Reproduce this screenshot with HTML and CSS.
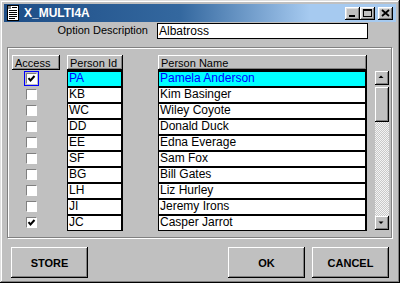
FILE: index.html
```html
<!DOCTYPE html>
<html>
<head>
<meta charset="utf-8">
<link rel="stylesheet" href="styles.css">
</head>
<body>
<div class="window">
  <div class="titlebar">
    <svg class="app-icon" width="12" height="16" viewBox="0 0 12 16">
      <rect x="0.5" y="0.5" width="11" height="15" fill="#fff" stroke="#000"/>
      <rect x="1" y="1" width="3" height="3" fill="#808080"/>
      <path d="M5 2.5h5M2 5.5h8M2 7.5h8M2 9.5h8M2 11.5h8M2 13.5h6" stroke="#000"/>
    </svg>
    <span class="title">X_MULTI4A</span>
    <div class="title-buttons">
      <span class="tbtn"><svg width="15" height="13" viewBox="0 0 15 13"><rect x="4" y="8" width="6" height="2" fill="#000"/></svg></span>
      <span class="tbtn"><svg width="15" height="13" viewBox="0 0 15 13"><rect x="3.5" y="2.5" width="8" height="7" fill="none" stroke="#000"/><rect x="3" y="2" width="9" height="2" fill="#000"/></svg></span>
      <span class="tbtn close"><svg width="15" height="13" viewBox="0 0 15 13"><path d="M4 3l7 6M11 3l-7 6" stroke="#000" stroke-width="1.8"/></svg></span>
    </div>
  </div>

  <div class="form-row">
    <span class="label">Option Description</span>
    <div class="input">Albatross</div>
  </div>

  <div class="group">
    <div class="col col-access">
      <div class="hdr">Access</div>
      <div class="crow"><span class="cb focus"><svg width="9" height="9" viewBox="0 0 9 9"><path d="M1.5 4.2l2 2.2 4-4.4" fill="none" stroke="#000" stroke-width="2"/></svg></span></div>
      <div class="crow"><span class="cb"></span></div>
      <div class="crow"><span class="cb"></span></div>
      <div class="crow"><span class="cb"></span></div>
      <div class="crow"><span class="cb"></span></div>
      <div class="crow"><span class="cb"></span></div>
      <div class="crow"><span class="cb"></span></div>
      <div class="crow"><span class="cb"></span></div>
      <div class="crow"><span class="cb"></span></div>
      <div class="crow"><span class="cb"><svg width="9" height="9" viewBox="0 0 9 9"><path d="M1.5 4.2l2 2.2 4-4.4" fill="none" stroke="#000" stroke-width="2"/></svg></span></div>
    </div>

    <div class="col col-id">
      <div class="hdr">Person Id</div>
      <div class="cell sel">PA</div>
      <div class="cell">KB</div>
      <div class="cell">WC</div>
      <div class="cell">DD</div>
      <div class="cell">EE</div>
      <div class="cell">SF</div>
      <div class="cell">BG</div>
      <div class="cell">LH</div>
      <div class="cell">JI</div>
      <div class="cell">JC</div>
    </div>

    <div class="col col-name">
      <div class="hdr">Person Name</div>
      <div class="cell sel">Pamela Anderson</div>
      <div class="cell">Kim Basinger</div>
      <div class="cell">Wiley Coyote</div>
      <div class="cell">Donald Duck</div>
      <div class="cell">Edna Everage</div>
      <div class="cell">Sam Fox</div>
      <div class="cell">Bill Gates</div>
      <div class="cell">Liz Hurley</div>
      <div class="cell">Jeremy Irons</div>
      <div class="cell">Casper Jarrot</div>
    </div>

    <div class="scrollbar">
      <span class="sbtn"><svg width="13" height="13" viewBox="0 0 13 13"><polygon points="3.5,7 8.5,7 6,4.5" fill="#000"/></svg></span>
      <span class="thumb"></span>
      <span class="track"></span>
      <span class="sbtn"><svg width="13" height="13" viewBox="0 0 13 13"><polygon points="3.5,5.5 8.5,5.5 6,8" fill="#000"/></svg></span>
    </div>
  </div>

  <div class="buttons">
    <span class="btn">STORE</span>
    <span class="btn push">OK</span>
    <span class="btn">CANCEL</span>
  </div>
</div>
</body>
</html>
```

FILE: styles.css
```css
* { box-sizing: border-box; }

html, body {
  margin: 0;
  padding: 0;
  background: #c0c0c0;
}

body {
  font-family: "Liberation Sans", Arial, sans-serif;
  font-size: 11px;
  color: #000;
}

.window {
  width: 400px;
  height: 283px;
  padding: 4px 4px 5px 4px;
  background: #c0c0c0;
  box-shadow: inset -1px -1px #000, inset 1px 1px #dfdfdf, inset -2px -2px #808080, inset 2px 2px #fff;
  display: flex;
  flex-direction: column;
}

/* title bar */
.titlebar {
  height: 18px;
  display: flex;
  align-items: center;
  padding: 0 3px 0 3px;
  background: linear-gradient(90deg, #1d4d86 0%, #34689f 45%, #a6caf0 78%, #a6caf0 100%);
}

.app-icon {
  display: block;
  flex: none;
}

.title {
  margin-left: 5px;
  color: #fff;
  font-weight: bold;
  font-size: 12px;
  line-height: 18px;
}

.title-buttons {
  margin-left: auto;
  display: flex;
  align-items: center;
}

.tbtn {
  display: block;
  width: 15px;
  height: 13px;
  background: #c0c0c0;
  box-shadow: inset -1px -1px #000, inset 1px 1px #fff, inset -2px -2px #808080, inset 2px 2px #dfdfdf;
}

.tbtn svg { display: block; }

.tbtn.close { margin-left: 3px; }

/* option row */
.form-row {
  margin-top: 1px;
  display: flex;
  height: 16px;
}

.label {
  width: 146px;
  padding-right: 2px;
  text-align: right;
  line-height: 14px;
}

.input {
  margin-left: 7px;
  width: 211px;
  height: 16px;
  border: 1px solid #000;
  background: #fff;
  font-size: 12px;
  line-height: 10px;
  padding: 2px 0 0 1px;
}

/* group box */
.group {
  margin: 8px 4px 0 3px;
  height: 191px;
  border: 1px solid #808080;
  box-shadow: inset 1px 1px #fff, 1px 1px #fff;
  padding: 7px 1px 6px 4px;
  display: flex;
  align-items: flex-start;
}

.col {
  display: flex;
  flex-direction: column;
}

.col-access { width: 48px; margin-right: 7px; }
.col-id { width: 56px; margin-right: 35px; }
.col-name { width: 209px; margin-right: 8px; }

.hdr {
  height: 15px;
  line-height: 16px;
  padding-left: 3px;
  background: #c0c0c0;
  box-shadow: inset -1px -1px #000, inset 1px 1px #fff, inset -2px -2px #808080;
  white-space: nowrap;
  overflow: hidden;
}

.crow {
  height: 16px;
  padding: 3px 0 0 14px;
}

.cb {
  display: block;
  width: 11px;
  height: 11px;
  background: #fff;
  border-top: 1px solid #808080;
  border-left: 1px solid #808080;
  border-right: 1px solid #fff;
  border-bottom: 1px solid #fff;
}

.cb svg { display: block; }

.cb.focus {
  outline: 1px solid #0000ff;
  outline-offset: 1px;
}

.cell {
  height: 16px;
  background: #fff;
  border-top: 2px solid #000;
  border-left: 1px solid #000;
  border-right: 2px solid #000;
  padding-left: 1px;
  font-size: 12px;
  line-height: 10px;
  padding-top: 1px;
  white-space: nowrap;
  overflow: hidden;
}

.cell:last-child {
  height: 17px;
  border-bottom: 1px solid #000;
}

.cell.sel {
  background: #00ffff;
  color: #0000ff;
}

/* scrollbar */
.scrollbar {
  margin-top: 16px;
  width: 14px;
  height: 159px;
  display: flex;
  flex-direction: column;
}

.sbtn {
  display: block;
  height: 14px;
  background: #c0c0c0;
  box-shadow: inset -1px -1px #000, inset 1px 1px #fff, inset -2px -2px #808080;
}

.sbtn svg { display: block; }

.thumb {
  display: block;
  margin-top: 2px;
  height: 35px;
  background: #c0c0c0;
  box-shadow: inset -1px -1px #000, inset 1px 1px #fff, inset -2px -2px #808080;
}

.track {
  display: block;
  flex: 1;
  background-color: #c0c0c0;
  background-image: repeating-conic-gradient(#f4f4f4 0 25%, #c8c8c8 0 50%);
  background-size: 2px 2px;
}

/* bottom buttons */
.buttons {
  margin-top: 9px;
  padding: 0 7px;
  display: flex;
  gap: 7px;
}

.btn {
  width: 77px;
  height: 31px;
  display: flex;
  align-items: center;
  justify-content: center;
  font-weight: bold;
  font-size: 11px;
  background: #c0c0c0;
  box-shadow: inset -1px -1px #000, inset 1px 1px #fff, inset -2px -2px #808080;
}

.btn.push { margin-left: auto; }
```
